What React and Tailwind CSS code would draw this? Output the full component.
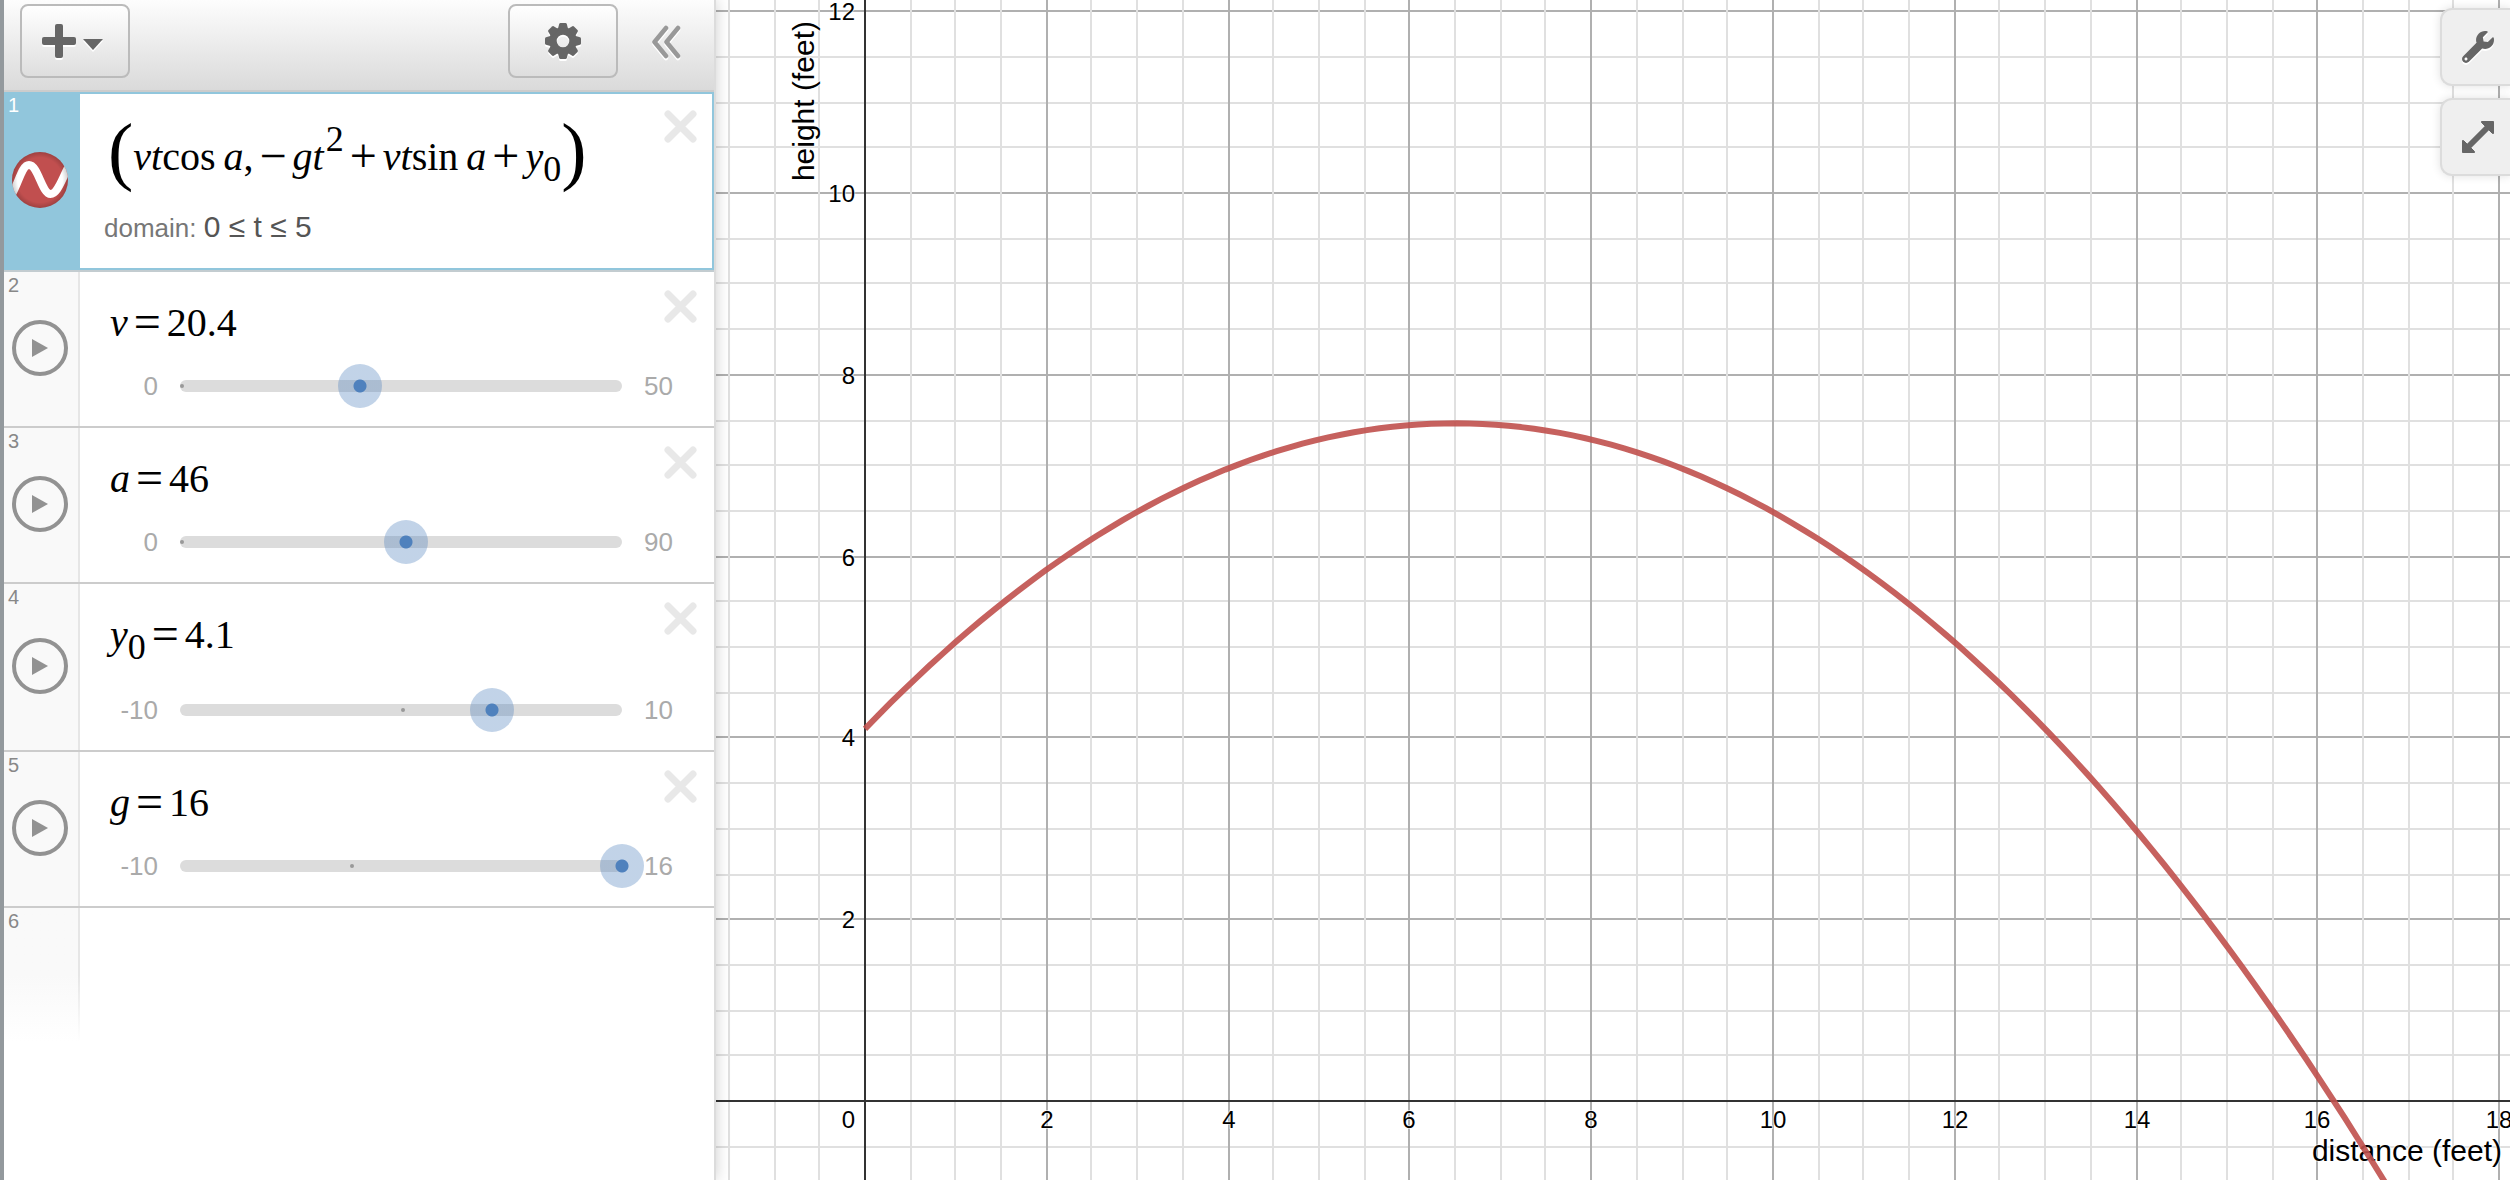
import React, { useEffect, useRef, useState } from "react";
import { FaWrench } from "react-icons/fa";

const UNIT = 90.79; // pixels per graph unit
const ORIGIN_LEFT = 149;
const ORIGIN_BOTTOM = 79;

const SLIDERS = [
  { id: 2, name: "v", value: 20.4, min: 0, max: 50 },
  { id: 3, name: "a", value: 46, min: 0, max: 90 },
  { id: 4, name: "y", sub: "0", value: 4.1, min: -10, max: 10 },
  { id: 5, name: "g", value: 16, min: -10, max: 16 },
];

const Op = ({ children }) => <span className="mx-1.5 inline-block align-[-2px] text-[48px]">{children}</span>;
const Sub = ({ children }) => <span className="align-[-11px] text-[36px] leading-[40px]">{children}</span>;
const Paren = ({ children }) => <span className="align-[-6px] text-[76px] leading-[40px]">{children}</span>;

const GearIcon = () => (
  <svg viewBox="-18 -18 36 36" className="h-9 w-9 drop-shadow-[0_2px_0_#fff]" fill="#666">
    <circle r="10" fill="none" stroke="#666" strokeWidth="7.4" />
    {[0, 45, 90, 135, 180, 225, 270, 315].map((deg) => (
      <path key={deg} d="M-5.4 -11 L-3.8 -17 Q-3.5 -18 -2.5 -18 H2.5 Q3.5 -18 3.8 -17 L5.4 -11 Z" transform={`rotate(${deg})`} />
    ))}
  </svg>
);

const CloseButton = ({ label, className = "top-[18px] right-[17px]" }) => (
  <button type="button" aria-label={label} className={`absolute ${className}`}>
    <svg viewBox="0 0 33 33" className="h-[33px] w-[33px]" stroke="#e8e8e8" strokeWidth="7" strokeLinecap="round">
      <path d="M4 4 L29 29 M29 4 L4 29" />
    </svg>
  </button>
);

const RowNumber = ({ children, className = "text-[#888]" }) => (
  <span className={`absolute top-0.5 left-1 text-[20px] leading-[22px] ${className}`}>{children}</span>
);

const Toolbar = () => (
  <div className="flex h-[92px] items-start border-b-2 border-[#ccc] bg-linear-to-b from-[#fdfdfd] to-[#dadada] pt-1 pr-8 pl-4">
    <button
      type="button"
      aria-label="Add item"
      className="flex h-[74px] w-[110px] items-center justify-center gap-[7px] rounded-lg border-2 border-[#bbb] bg-linear-to-b from-white to-[#dedede] pr-1.5 pb-px"
    >
      <svg viewBox="0 0 34 34" className="h-[34px] w-[34px] drop-shadow-[0_2px_0_#fff]" fill="#666">
        <rect x="13" width="8" height="34" rx="2" />
        <rect y="13" width="34" height="8" rx="2" />
      </svg>
      <svg viewBox="0 0 20 11" className="mt-2 h-[11px] w-5 drop-shadow-[0_2px_0_#fff]" fill="#666">
        <path d="M0 0 H20 L10 11 Z" />
      </svg>
    </button>
    <button
      type="button"
      aria-label="Edit list"
      className="ml-auto flex h-[74px] w-[110px] items-center justify-center rounded-lg border-2 border-[#bbb] bg-linear-to-b from-white to-[#dedede]"
    >
      <GearIcon />
    </button>
    <button type="button" aria-label="Hide list" className="mt-[21px] ml-[34px]">
      <svg viewBox="0 0 30 34" className="h-[34px] w-[30px] drop-shadow-[0_2px_0_#fff]" fill="none" stroke="#999" strokeWidth="4.5" strokeLinecap="round" strokeLinejoin="round">
        <path d="M14 3 L2.5 17 L14 31 M26 3 L14.5 17 L26 31" />
      </svg>
    </button>
  </div>
);

const CurveRow = () => (
  <li className="flex h-[180px] border-b-2 border-[#c3ccd0]">
    <div className="relative flex w-[76px] shrink-0 items-center justify-center bg-[#91c6dc] pr-1 pb-0.5">
      <RowNumber className="text-white">1</RowNumber>
      <button type="button" aria-label="Toggle curve">
        <svg viewBox="0 0 56 56" className="h-14 w-14">
          <defs>
            <clipPath id="disc"><circle cx="28" cy="28" r="28" /></clipPath>
            <radialGradient id="shade">
              <stop offset="0.8" stopColor="#000" stopOpacity="0" />
              <stop offset="1" stopColor="#000" stopOpacity="0.18" />
            </radialGradient>
          </defs>
          <g clipPath="url(#disc)">
            <rect width="56" height="56" fill="#c14f4f" />
            <path d="M0 42 C7 30 10 13 17 13 C26 13 30 42 38.5 42 C46 42 50 26 58 12" fill="none" stroke="#fff" strokeWidth="8" />
            <rect width="56" height="56" fill="url(#shade)" />
          </g>
        </svg>
      </button>
    </div>
    <div className="relative grow border-y-2 border-r-2 border-[#91c6dc] pt-7 pl-6">
      <div className="pl-1 font-['Liberation_Serif',serif] text-[40px] leading-[40px] whitespace-nowrap text-black">
        <Paren>(</Paren>
        <i>vt</i>cos<i className="ml-2">a</i>,<Op>−</Op>
        <i>gt</i>
        <span className="ml-0.5 align-[19px] text-[36px] leading-[34px]">2</span>
        <Op>+</Op>
        <i>vt</i>sin<i className="ml-2">a</i>
        <Op>+</Op>
        <i>y</i>
        <Sub>0</Sub>
        <Paren>)</Paren>
      </div>
      <p className="mt-5 text-[26px] leading-[36px] text-[#777]">
        domain: <span className="text-[30px] text-[#555]">0 ≤ t ≤ 5</span>
      </p>
      <CloseButton label="Delete expression 1" className="top-4 right-[15px]" />
    </div>
  </li>
);

const SliderRow = ({ item, value, onChange }) => {
  const { id, name, sub, min, max } = item;
  const zero = ((0 - min) / (max - min)) * 100;

  return (
    <li className="flex border-b-2 border-[#ccc]">
      <div className="relative flex w-[76px] shrink-0 items-center justify-center border-r-2 border-[#e6e6e6] bg-[#f9f9f9] pr-0.5 pb-0.5">
        <RowNumber>{id}</RowNumber>
        <button type="button" aria-label={`Play ${name}`} className="flex h-14 w-14 items-center justify-center rounded-full border-4 border-[#929292]">
          <svg viewBox="0 0 16 18" className="h-[18px] w-4" fill="#929292">
            <path d="M0 0 L16 9 L0 18 Z" />
          </svg>
        </button>
      </div>
      <div className="relative grow pt-[30px] pb-[18px] pl-[30px]">
        <label htmlFor={`slider-${id}`} className="block font-['Liberation_Serif',serif] text-[40px] leading-[40px] whitespace-nowrap text-black">
          <i>{name}</i>
          {sub && <Sub>{sub}</Sub>}
          <Op>=</Op>
          {value}
        </label>
        <div className="mt-[21px] flex items-center text-[26px] leading-[36px] text-[#aaa]">
          <span className="w-12 shrink-0 text-right">{min}</span>
          <div className="relative flex h-11 w-[486px] items-center px-[22px]">
            <div className="relative h-3 grow rounded-full bg-[#dcdcdc]">
              <span className="absolute top-1 h-1 w-1 rounded-full bg-[#999]" style={{ left: `${zero}%` }} />
            </div>
            <input
              id={`slider-${id}`}
              type="range"
              min={min}
              max={max}
              step="0.1"
              value={value}
              onChange={(e) => onChange(Number(e.target.value))}
              className="absolute inset-0 h-11 w-full cursor-pointer appearance-none bg-transparent [&::-webkit-slider-thumb]:h-11 [&::-webkit-slider-thumb]:w-11 [&::-webkit-slider-thumb]:appearance-none [&::-webkit-slider-thumb]:rounded-full [&::-webkit-slider-thumb]:bg-[radial-gradient(circle,#4f81bd_6px,rgba(79,129,189,0.35)_7px)]"
            />
          </div>
          <span>{max}</span>
        </div>
        <CloseButton label={`Delete expression ${id}`} />
      </div>
    </li>
  );
};

// grid lines sit on even pixels, two pixels wide
const snap = (n) => Math.round((n * UNIT) / 2) * 2;

const Graph = ({ v, a, y0, g }) => {
  const ref = useRef(null);
  const [size, setSize] = useState({ width: 1794, height: 1180 });

  useEffect(() => {
    const observer = new ResizeObserver(([entry]) => {
      const { width, height } = entry.contentRect;
      setSize({ width, height });
    });
    observer.observe(ref.current);
    return () => observer.disconnect();
  }, []);

  const { width, height } = size;
  const ox = ORIGIN_LEFT;
  const oy = height - ORIGIN_BOTTOM;

  const ticks = (from, to) => {
    const list = [];
    for (let k = Math.ceil(from * 2); k <= to * 2; k++) if (k !== 0) list.push(k / 2);
    return list;
  };
  const xs = ticks(-ox / UNIT, (width - ox) / UNIT + 0.1);
  const ys = ticks(-ORIGIN_BOTTOM / UNIT, oy / UNIT);
  const order = (list) => [...list.filter((n) => n % 2 !== 0), ...list.filter((n) => n % 2 === 0)];
  const lineColor = (n) => (n % 2 === 0 ? "#b0b0b0" : "#e0e0e0");

  const rad = (a * Math.PI) / 180;
  const points = [];
  for (let t = 0; t <= 5; t += 0.01) {
    const x = v * t * Math.cos(rad);
    const y = -g * t * t + v * t * Math.sin(rad) + y0;
    points.push(`${(ox + x * UNIT).toFixed(1)},${(oy - y * UNIT).toFixed(1)}`);
    if (y < -2) break;
  }

  return (
    <svg ref={ref} className="absolute inset-0 h-full w-full bg-white font-['Liberation_Sans',Arial,sans-serif]" role="img" aria-label="Height against distance">
      <g strokeWidth="2">
        {order(ys).map((n) => (
          <line key={`y${n}`} x1="0" x2={width} y1={oy - snap(n)} y2={oy - snap(n)} stroke={lineColor(n)} />
        ))}
        {order(xs).map((n) => (
          <line key={`x${n}`} y1="0" y2={height} x1={ox + snap(n)} x2={ox + snap(n)} stroke={lineColor(n)} />
        ))}
        <line x1="0" x2={width} y1={oy} y2={oy} stroke="#333" />
        <line y1="0" y2={height} x1={ox} x2={ox} stroke="#333" />
      </g>
      <g fontSize="24" fill="#000" stroke="#fff" strokeWidth="2" strokeOpacity="0.6" paintOrder="stroke">
        {ys.filter((n) => n % 2 === 0).map((n) => (
          <text key={n} x={ox - 10} y={oy - snap(n) + 9} textAnchor="end">{n}</text>
        ))}
        {xs.filter((n) => n % 2 === 0).map((n) => (
          <text key={n} x={ox + snap(n)} y={oy + 27} textAnchor="middle">{n}</text>
        ))}
        <text x={ox - 10} y={oy + 27} textAnchor="end">0</text>
        <g fontSize="30">
          <text x={width - 8} y={height - 19} textAnchor="end">distance (feet)</text>
          <text transform="translate(98 21) rotate(-90)" textAnchor="end">height (feet)</text>
        </g>
      </g>
      <polyline points={points.join(" ")} fill="none" stroke="#c0504d" strokeOpacity="0.9" strokeWidth="6" strokeLinejoin="round" />
    </svg>
  );
};

const GraphButton = ({ label, children }) => (
  <button
    type="button"
    aria-label={label}
    className="flex h-[78px] w-[70px] items-center justify-center rounded-l-xl border-2 border-r-0 border-[#dcdcdc] bg-[#efefef] pl-1 shadow-[0_0_10px_rgba(0,0,0,0.12)]"
  >
    {children}
  </button>
);

const App = () => {
  const [values, setValues] = useState(SLIDERS.map((s) => s.value));
  const [v, a, y0, g] = values;

  const setValue = (index, next) => setValues(values.map((old, i) => (i === index ? next : old)));

  return (
    <div className="flex h-screen overflow-hidden bg-white font-['Liberation_Sans',Arial,sans-serif]">
      <aside className="relative z-10 w-[716px] shrink-0 border-r-2 border-l-4 border-r-[#dcdcdc] border-l-[#93999d] bg-white shadow-[0_0_14px_rgba(0,0,0,0.2)]">
        <Toolbar />
        <ol>
          <CurveRow />
          {SLIDERS.map((item, i) => (
            <SliderRow key={item.id} item={item} value={values[i]} onChange={(next) => setValue(i, next)} />
          ))}
          <li className="flex h-[134px]">
            <div className="relative w-[74px] bg-linear-to-b from-[#f9f9f9] from-50% to-white">
              <RowNumber>6</RowNumber>
            </div>
            <div className="w-0.5 bg-linear-to-b from-[#e6e6e6] from-50% to-white" />
          </li>
        </ol>
      </aside>

      <main className="relative min-w-0 grow overflow-hidden">
        <Graph v={v} a={a} y0={y0} g={g} />
        <div className="absolute top-2 right-0 flex flex-col gap-3">
          <GraphButton label="Graph settings">
            <FaWrench className="h-8 w-8 text-[#666] drop-shadow-[0_2px_0_#fff]" />
          </GraphButton>
          <GraphButton label="Full screen">
            <svg viewBox="0 0 32 32" className="h-8 w-8" fill="#666" stroke="#666">
              <path d="M7 25 L25 7" strokeWidth="6" />
              <path d="M19.5 0.5 H31.5 V12.5 H30.5 L19.5 1.5 Z M0.5 19.5 H1.5 L12.5 30.5 V31.5 H0.5 Z" strokeLinejoin="round" />
            </svg>
          </GraphButton>
        </div>
      </main>
    </div>
  );
};

export default App;
